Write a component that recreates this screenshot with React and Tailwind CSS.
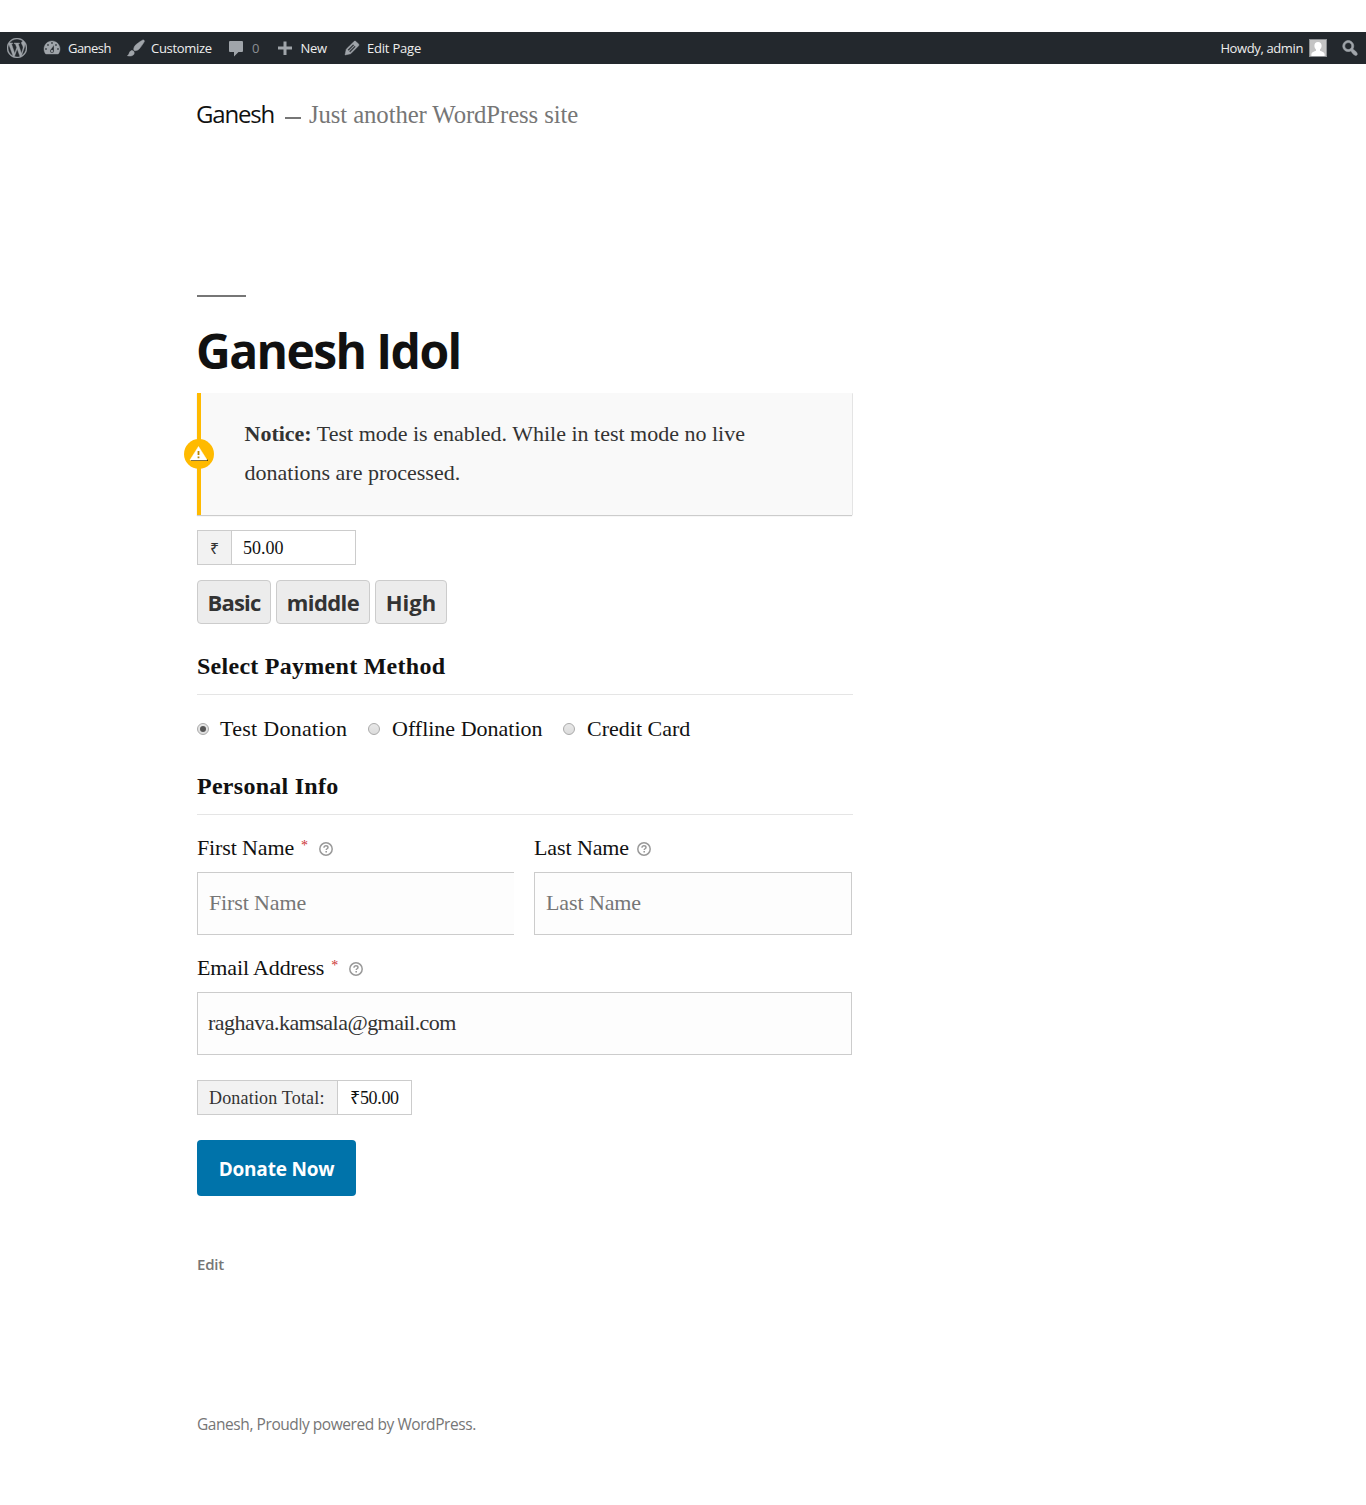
import React from "react";
import { SiWordpress } from "react-icons/si";

const sans = "font-['Open_Sans','Noto_Sans',sans-serif]";
const serif = "font-['Liberation_Serif','Noto_Sans',serif]";

function DashIcon({ d, className = "" }) {
  return (
    <svg viewBox="0 0 20 20" className={`h-5 w-5 shrink-0 fill-[#a0a5aa] ${className}`} aria-hidden="true">
      <path d={d} />
    </svg>
  );
}

const icons = {
  dashboard:
    "M3.76 16h12.48c1.1-1.37 1.76-3.11 1.76-5 0-4.42-3.58-8-8-8s-8 3.58-8 8c0 1.89.66 3.63 1.76 5zM10 4c.55 0 1 .45 1 1s-.45 1-1 1-1-.45-1-1 .45-1 1-1zM6 6c.55 0 1 .45 1 1s-.45 1-1 1-1-.45-1-1 .45-1 1-1zm8 0c.55 0 1 .45 1 1s-.45 1-1 1-1-.45-1-1 .45-1 1-1zm-5.37 5.55L12 7v6c0 1.1-.9 2-2 2s-2-.9-2-2c0-.57.24-1.08.63-1.45zM4 10c.55 0 1 .45 1 1s-.45 1-1 1-1-.45-1-1 .45-1 1-1zm12 0c.55 0 1 .45 1 1s-.45 1-1 1-1-.45-1-1 .45-1 1-1zm-5 3c0-.55-.45-1-1-1s-1 .45-1 1 .45 1 1 1 1-.45 1-1z",
  brush:
    "M18.33 3.57s.27-.8-.31-1.36c-.53-.52-1.22-.24-1.22-.24-.61.3-5.76 3.47-7.67 5.57-.86.96-2.06 3.79-1.09 4.82.92.98 3.96-.17 4.79-1 2.06-2.06 5.21-7.17 5.5-7.79zM1.4 17.65c2.37-1.56 1.46-3.41 3.23-4.64.93-.65 2.22-.62 3.08.29.63.67.8 2.57-.16 3.46-1.57 1.45-4 1.55-6.15.89z",
  comment: "M4.3 3h11.4c.8 0 1.3.5 1.3 1.3v8.4c0 .8-.5 1.3-1.3 1.3H12.500l-4.500 4.500V14H4.3C3.500 14 3 13.500 3 12.700V4.300C3 3.500 3.500 3 4.300 3z",
  plus: "M8.500 3.500h3v5h5.500v3h-5.500v5.500h-3v-5.500H3v-3h5.500z",
  pencil:
    "M13.890 3.390l2.710 2.720c.46.46.42 1.24.03 1.640l-8.010 8.020-5.560 1.160 1.160-5.580s7.600-7.630 7.990-8.030c.39-.39 1.220-.39 1.680.07zm-2.730 2.790l-5.590 5.610 1.110 1.110 5.540-5.650zm-2.970 8.230l5.580-5.600-1.070-1.080-5.590 5.600z",
  search:
    "M12.14 4.18c1.87 1.87 2.11 4.75.72 6.89.12.1.22.21.36.31.2.16.47.36.81.59.34.24.56.39.66.47.42.31.73.57.94.78.32.32.6.65.84 1 .25.35.44.69.59 1.04.14.35.21.68.18 1-.02.32-.14.59-.36.81s-.49.34-.81.36c-.31.02-.65-.04-.99-.19-.35-.14-.7-.34-1.04-.59-.35-.24-.68-.52-1-.84-.21-.21-.47-.52-.77-.93-.1-.13-.25-.35-.47-.66-.22-.32-.4-.57-.56-.78-.16-.2-.29-.35-.44-.5-2.07 1.09-4.69.76-6.44-.98-2.14-2.15-2.14-5.64 0-7.78 2.15-2.15 5.63-2.15 7.78 0zm-1.41 6.36c1.36-1.37 1.36-3.58 0-4.95-1.37-1.37-3.59-1.37-4.95 0-1.37 1.37-1.37 3.58 0 4.95 1.36 1.37 3.58 1.37 4.95 0z",
};

function AdminBar() {
  return (
    <nav className={`${sans} flex h-8 items-center justify-between bg-[#23282d] text-[13px] leading-8 whitespace-nowrap text-[#eeeeee]`}>
      <div className="flex items-center">
        <SiWordpress className="ml-[7px] h-5 w-5 stroke-[#a0a5aa] stroke-[0.500] text-[#a0a5aa]" />
        <a className="ml-[15px] flex w-[84px] items-center">
          <DashIcon d={icons.dashboard} className="stroke-[#a0a5aa] stroke-[0.400]" />
          <span className="ml-1.5 tracking-[-0.55px]">Ganesh</span>
        </a>
        <a className="flex w-[100px] items-center">
          <DashIcon d={icons.brush} className="stroke-[#a0a5aa] stroke-[0.500]" />
          <span className="ml-[5px] tracking-[-0.3px]">Customize</span>
        </a>
        <a className="flex w-[49px] items-center">
          <DashIcon d={icons.comment} />
          <span className="ml-1.5 text-[#8b8f93]">0</span>
        </a>
        <a className="flex w-[67px] items-center">
          <DashIcon d={icons.plus} />
          <span className="ml-[5.500px] tracking-[-0.3px]">New</span>
        </a>
        <a className="flex items-center">
          <DashIcon d={icons.pencil} className="stroke-[#a0a5aa] stroke-[0.500]" />
          <span className="ml-[5px] tracking-[-0.2px]">Edit Page</span>
        </a>
      </div>
      <div className="flex items-center">
        <span className="tracking-[-0.38px]">Howdy, admin</span>
        <svg viewBox="0 0 18 18" className="ml-1.5 h-[18px] w-[18px]" aria-hidden="true">
          <rect width="18" height="18" fill="#8c8f92" />
          <rect x="1" y="1" width="16" height="16" fill="#c4c4c4" />
          <path d="M9 3c2.300 0 3.600 1.600 3.600 3.800 0 1.700-.8 3-1.600 3.700v1.200c1.800.7 4.300 1.300 4.600 3.400V17H2.400v-1.900c.3-2.100 2.800-2.700 4.600-3.400v-1.200C6.200 9.800 5.400 8.500 5.400 6.800 5.400 4.600 6.700 3 9 3z" fill="#fff" />
        </svg>
        <DashIcon d={icons.search} className="mr-1.5 ml-[13px] stroke-[#a0a5aa] stroke-[0.600]" />
      </div>
    </nav>
  );
}

function Help() {
  return (
    <svg viewBox="0 0 14 14" className="h-3.5 w-3.5 shrink-0" fill="none" stroke="#999" aria-hidden="true">
      <circle cx="7" cy="7" r="6.200" strokeWidth="1.500" />
      <path d="M5 5.700C5 4.500 5.900 3.800 7 3.800s2 .7 2 1.700c0 1.200-1.800 1.300-1.800 2.500" strokeWidth="1.500" />
      <path d="M7.200 9v1.500" strokeWidth="1.600" />
    </svg>
  );
}

function SectionTitle({ children, className }) {
  return (
    <h2 className={`flex h-[49px] items-start border-b border-[#e5e5e5] text-[24px] leading-10 font-bold tracking-[0.27px] text-[#111] ${className}`}>
      {children}
    </h2>
  );
}

function Radio({ checked, label, className, textClass }) {
  return (
    <label className={`flex items-center ${className}`}>
      <span className="flex h-3 w-3 items-center justify-center rounded-full border border-[#aaa] bg-linear-to-b from-[#e8e8e8] to-[#dcdcdc]">
        {checked && <span className="h-1.5 w-1.5 rounded-full bg-[#555]" />}
      </span>
      <span className={textClass}>{label}</span>
    </label>
  );
}

function FieldLabel({ text, required, className }) {
  return (
    <label className="flex h-10 items-center text-[22px] leading-10 text-[#111]">
      <span className={className}>{text}</span>
      {required && <span className="ml-[7px] h-10 text-[14px] leading-[35px] text-[#c33]">*</span>}
      <span className={`${required ? "ml-[11px]" : "ml-2"} mt-0.5`}>
        <Help />
      </span>
    </label>
  );
}

export default function App() {
  return (
    <div className={`${serif} min-h-[1505px] overflow-hidden bg-white pt-8 text-[#111]`}>
      <AdminBar />
      <div className="ml-[197px] w-[656px] whitespace-nowrap">
        <header className="mt-[31px] flex h-10 items-start">
          <h1 className={`${sans} -ml-px w-[89px] text-[24px] leading-[38px] tracking-[-1.2px]`}>Ganesh</h1>
          <i className="mt-[22px] mr-2 h-0.5 w-4 bg-[#767676]" />
          <p className="text-[24.750px] leading-10 tracking-[-0.100px] text-[#767676]">Just another WordPress site</p>
        </header>

        <div className="mt-[160px] h-0.5 w-[49px] bg-[#767676]" />
        <h1 className={`${sans} mt-[24px] -ml-px h-[60px] text-[48px] leading-[60px] font-bold tracking-[-1.6px]`}>Ganesh Idol</h1>

        <section className="relative mt-[12px] h-[122px] w-[655px] border-l-4 border-[#ffba00] bg-[#f9f9f9] pt-[21px] pl-[43.500px] text-[22px] leading-[39px] text-[#333] shadow-[0_1px_1px_0_rgba(0,0,0,0.2),1px_0_0_0_#ececec]">
          <p>
            <b>Notice:</b> Test mode is enabled. While in test mode no live
          </p>
          <p>donations are processed.</p>
          <svg viewBox="0 0 30 30" className="absolute top-[46px] -left-[17px] h-[30px] w-[30px]" aria-hidden="true">
            <circle cx="15" cy="15" r="15" fill="#ffba00" />
            <path d="M7 20.500h17v1.500H7z" fill="#5e4500" />
            <path d="M14.500 7.500 L23 21 H6 Z" fill="#fff" stroke="#fff" strokeWidth="0.500" strokeLinejoin="round" />
            <path d="M14.500 12v4M14.500 17.500v1.800" stroke="#b88600" strokeWidth="1.800" />
          </svg>
        </section>

        <div className="mt-[15px] flex h-[35px] w-[159px] border border-[#ccc] text-[18px] leading-[34px]">
          <span className="flex w-[34px] justify-center border-r border-[#ccc] bg-[#f2f2f2] text-[16px] leading-[35px] text-[#333]">₹</span>
          <span className="ml-[11px]">50.00</span>
        </div>

        <div className={`${sans} mt-[15px] flex h-11 gap-[5px] text-[22px] leading-[42px] font-bold text-[#333]`}>
          <button className="w-[74px] rounded border border-[#ccc] bg-[#ececec] tracking-[-0.8px]">Basic</button>
          <button className="w-[94px] rounded border border-[#ccc] bg-[#ececec] tracking-[-0.6px]">middle</button>
          <button className="w-[72px] rounded border border-[#ccc] bg-[#ececec]">High</button>
        </div>

        <SectionTitle className="mt-[22px]">Select Payment Method</SectionTitle>
        <div className="mt-[14px] flex h-10 text-[22px] leading-10">
          <Radio checked label="Test Donation" className="w-[171px]" textClass="ml-[11px] tracking-[0.28px]" />
          <Radio label="Offline Donation" className="w-[195px]" textClass="ml-3" />
          <Radio label="Credit Card" textClass="ml-3" />
        </div>

        <SectionTitle className="mt-[17px]">Personal Info</SectionTitle>

        <div className="mt-[13px] flex gap-5 text-[22px]">
          <div className="w-[317px]">
            <FieldLabel text="First Name" required className="tracking-[-0.13px]" />
            <div className="mt-1 h-[63px] border border-r-0 border-[#ccc] bg-[#fdfdfd] pl-[11px] leading-[60px] tracking-[-0.13px] text-[#767676]">First Name</div>
          </div>
          <div className="w-[318px]">
            <FieldLabel text="Last Name" className="tracking-[-0.1px]" />
            <div className="mt-1 h-[63px] border border-[#ccc] bg-[#fdfdfd] pl-[11px] leading-[60px] tracking-[-0.1px] text-[#767676]">Last Name</div>
          </div>
        </div>

        <div className="mt-[13px] w-[655px] text-[22px]">
          <FieldLabel text="Email Address" required className="tracking-[-0.13px]" />
          <div className="mt-1 h-[63px] border border-[#ccc] bg-[#fdfdfd] pl-2.5 leading-[60px] tracking-[-0.52px] text-[#333]">raghava.kamsala@gmail.com</div>
        </div>

        <div className="mt-[25px] flex h-[35px] w-[215px] border border-[#ccc] text-[18px] leading-[34px]">
          <span className="w-[140px] border-r border-[#ccc] bg-[#f2f2f2] pl-[11px] tracking-[0.180px] text-[#333]">Donation Total:</span>
          <span className="ml-3 tracking-[-0.35px]">₹50.00</span>
        </div>

        <button className={`${sans} mt-[25px] block h-14 w-[159px] rounded-[4px] bg-[#0073aa] text-[19px] leading-[58px] font-bold tracking-[-0.2px] text-white`}>
          Donate Now
        </button>

        <a className={`${sans} mt-[54px] block h-7 text-[15px] leading-7 font-semibold tracking-[-0.2px] text-[#767676]`}>Edit</a>

        <footer className={`${sans} mt-[134px] text-[15.500px] leading-6 tracking-[-0.43px] text-[#767676]`}>
          Ganesh, Proudly powered by WordPress.
        </footer>
      </div>
    </div>
  );
}
